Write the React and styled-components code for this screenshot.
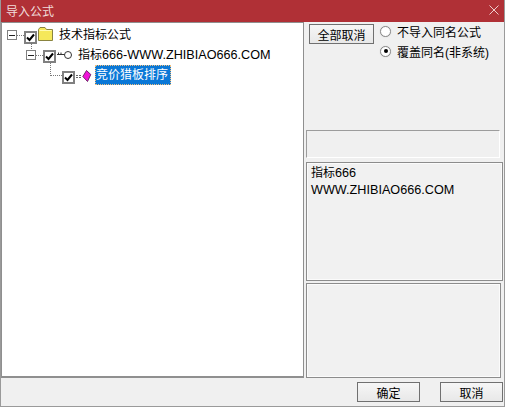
import React from 'react';
import styled, { createGlobalStyle } from 'styled-components';

const Global = createGlobalStyle`
  html, body {
    margin: 0;
    padding: 0;
    background: #f0f0f0;
  }
  * {
    box-sizing: border-box;
  }
`

const Dialog = styled.div`
  width: 505px;
  height: 407px;
  display: flex;
  flex-direction: column;
  background: #f0f0f0;
  border-left: 1px solid #9a9a9a;
  border-right: 1px solid #9a9a9a;
  border-bottom: 1px solid #9a9a9a;
  font-family: "Liberation Sans", "Noto Sans CJK SC", sans-serif;
  font-size: 12px;
  color: #000;
  overflow: hidden;
`
const TitleBar = styled.div`
  height: 22px;
  margin: 0 -1px;
  flex: none;
  display: flex;
  align-items: center;
  justify-content: space-between;
  padding: 0 6px 2px 6px;
  background: #b03036;
  color: #f0dcdc;
  font-size: 12px;
`
const Body = styled.div`
  flex: none;
  height: 356px;
  display: flex;
  gap: 2px;
`
const TreePanel = styled.div`
  width: 303px;
  background: #fff;
  border: 2px solid #8f8f8f;
  border-top-width: 1px;
  border-left-width: 1px;
  border-right-width: 1px;
  padding-top: 3px;
  display: flex;
  flex-direction: column;
`
const Row = styled.div`
  position: relative;
  height: 20px;
  display: flex;
  align-items: center;
  padding-left: ${p => p.$indent}px;
`
const Expander = styled.span`
  width: 10px;
  height: 10px;
  flex: none;
  margin-top: -2px;
  border: 1px solid #808080;
  display: flex;
  align-items: center;
  justify-content: center;
  &::before {
    content: '';
    width: 6px;
    height: 1px;
    background: #222;
  }
`
const DotsH = styled.span`
  width: ${p => p.$w}px;
  flex: none;
  margin-top: -2px;
  border-top: 1px dotted #777;
`
const DotsV = styled.span`
  position: absolute;
  left: ${p => p.$left}px;
  top: ${p => p.$top}px;
  height: ${p => p.$h}px;
  border-left: 1px dotted #777;
`
const Check = styled.span`
  width: 13px;
  height: 13px;
  flex: none;
  margin-top: ${p => p.$top}px;
  background: #fff;
  border: 2px solid #808080;
  display: flex;
  align-items: center;
  justify-content: center;
`
const IconSlot = styled.span`
  flex: none;
  display: flex;
  margin-left: 1px;
  margin-top: ${p => p.$top || 0}px;
`
const Label = styled.span`
  margin-left: ${p => p.$gap}px;
  margin-top: -3px;
  white-space: nowrap;
  line-height: 18px;
`
const Latin = styled.span`
  font-size: 12.65px;
`
const SelectedLabel = styled.span`
  margin-left: 3px;
  margin-top: -3px;
  padding: 0 1px 0 0;
  width: 76px;
  height: 20px;
  line-height: 18px;
  white-space: nowrap;
  background: #0a78d7;
  color: #fff;
  border: 1px dotted #f0c080;
`
const Side = styled.div`
  flex: 1;
  display: flex;
  flex-direction: column;
`
const TopControls = styled.div`
  height: 108px;
  flex: none;
  display: flex;
  align-items: flex-start;
  padding: 2px 0 0 3px;
  gap: 6px;
`
const Button = styled.div`
  width: ${p => p.$w}px;
  height: 20px;
  flex: none;
  display: flex;
  align-items: center;
  justify-content: center;
  background: linear-gradient(#f6f6f6, #e8e8e8);
  border: 1px solid #707070;
`
const Radios = styled.div`
  display: flex;
  flex-direction: column;
  gap: 2px;
  margin-top: -2px;
`
const RadioRow = styled.div`
  height: 18px;
  display: flex;
  align-items: center;
  gap: 6px;
  white-space: nowrap;
`
const Radio = styled.span`
  width: 11px;
  height: 11px;
  flex: none;
  border-radius: 50%;
  background: #fff;
  border: 1px solid #8a8a8a;
  box-shadow: 0 0 1px #bbb;
  display: flex;
  align-items: center;
  justify-content: center;
  &::before {
    content: '';
    width: 4px;
    height: 4px;
    border-radius: 50%;
    background: ${p => (p.$on ? '#000' : 'transparent')};
  }
`
const InsetEmpty = styled.div`
  width: 194px;
  height: 28px;
  margin-bottom: 4px;
  flex: none;
  border-top: 1px solid #9c9c9c;
  border-left: 1px solid #9c9c9c;
  border-right: 1px solid #fff;
  border-bottom: 1px solid #fff;
`
const InfoBox = styled.div`
  width: ${p => p.$w}px;
  height: ${p => p.$h}px;
  margin-bottom: ${p => p.$mb}px;
  flex: none;
  padding: 2px 4px;
  line-height: 17px;
  background: #f1f1f1;
  border: 1px solid #8c8c8c;
  box-shadow: inset 0 0 0 1px #fbfbfb;
`
const Footer = styled.div`
  flex: 1;
  display: flex;
  align-items: flex-start;
  justify-content: flex-end;
  padding: 4px 1px 0 0;
  gap: 20px;
`

const Tick = () => (
  <svg width="9" height="9" viewBox="0 0 9 9">
    <path d="M1 4.5 L3.5 7 L8 1.5" fill="none" stroke="#000" strokeWidth="2" />
  </svg>
)

const Folder = () => (
  <svg width="16" height="14" viewBox="0 0 16 14">
    <path d="M0.5 13.5 V2.5 L2 0.5 H7 L8.5 2.5 H14.5 V13.5 Z" fill="#f5e85a" stroke="#8a8440" />
    <path d="M1.5 3.5 H13.5" stroke="#fffbb0" />
  </svg>
)

const KeyIcon = () => (
  <svg width="16" height="10" viewBox="0 0 16 10">
    <circle cx="11" cy="5" r="3.5" fill="#fff" stroke="#333" />
    <path d="M0 4.5 H7.5 M1.5 4.5 V2.5 M4 4.5 V2.5" stroke="#333" fill="none" />
  </svg>
)

const GemIcon = () => (
  <svg width="16" height="12" viewBox="0 0 16 12">
    <path d="M0 5.5 H6 M0 7.5 H6" stroke="#666" strokeDasharray="2 1" />
    <path d="M10.5 0.5 L14.8 4.5 L11.5 11.5 L6.8 6.5 Z" fill="#f015d8" stroke="#50104c" strokeWidth="0.8" />
  </svg>
)

const CloseIcon = () => (
  <svg width="10" height="10" viewBox="0 0 10 10">
    <path d="M0.5 0.5 L9.5 9.5 M9.5 0.5 L0.5 9.5" stroke="#eecccc" fill="none" />
  </svg>
)

export default function App() {
  return (
    <Dialog>
      <Global />
      <TitleBar>
        <span>导入公式</span>
        <CloseIcon />
      </TitleBar>
      <Body>
        <TreePanel>
          <Row $indent={5}>
            <Expander />
            <DotsH $w={7} />
            <Check $top={2}><Tick /></Check>
            <IconSlot $top={-5}><Folder /></IconSlot>
            <Label $gap={5}>技术指标公式</Label>
            <DotsV $left={29} $top={17} $h={8} />
          </Row>
          <Row $indent={24}>
            <Expander />
            <DotsH $w={7} />
            <Check $top={1}><Tick /></Check>
            <IconSlot $top={-2}><KeyIcon /></IconSlot>
            <Label $gap={5}>指标<Latin>666-WWW.ZHIBIAO666.COM</Latin></Label>
            <DotsV $left={48} $top={17} $h={11} />
          </Row>
          <Row $indent={48}>
            <DotsH $w={12} />
            <Check $top={3}><Tick /></Check>
            <IconSlot $top={0}><GemIcon /></IconSlot>
            <SelectedLabel>竞价猎板排序</SelectedLabel>
          </Row>
        </TreePanel>
        <Side>
          <TopControls>
            <Button $w={65}>全部取消</Button>
            <Radios>
              <RadioRow><Radio />不导入同名公式</RadioRow>
              <RadioRow><Radio $on />覆盖同名(非系统)</RadioRow>
            </Radios>
          </TopControls>
          <InsetEmpty />
          <InfoBox $w={197} $h={119} $mb={2}>
            指标<Latin>666</Latin>
            <br />
            <Latin>WWW.ZHIBIAO666.COM</Latin>
          </InfoBox>
          <InfoBox $w={195} $h={95} $mb={0} />
        </Side>
      </Body>
      <Footer>
        <Button $w={63}>确定</Button>
        <Button $w={63}>取消</Button>
      </Footer>
    </Dialog>
  );
}
